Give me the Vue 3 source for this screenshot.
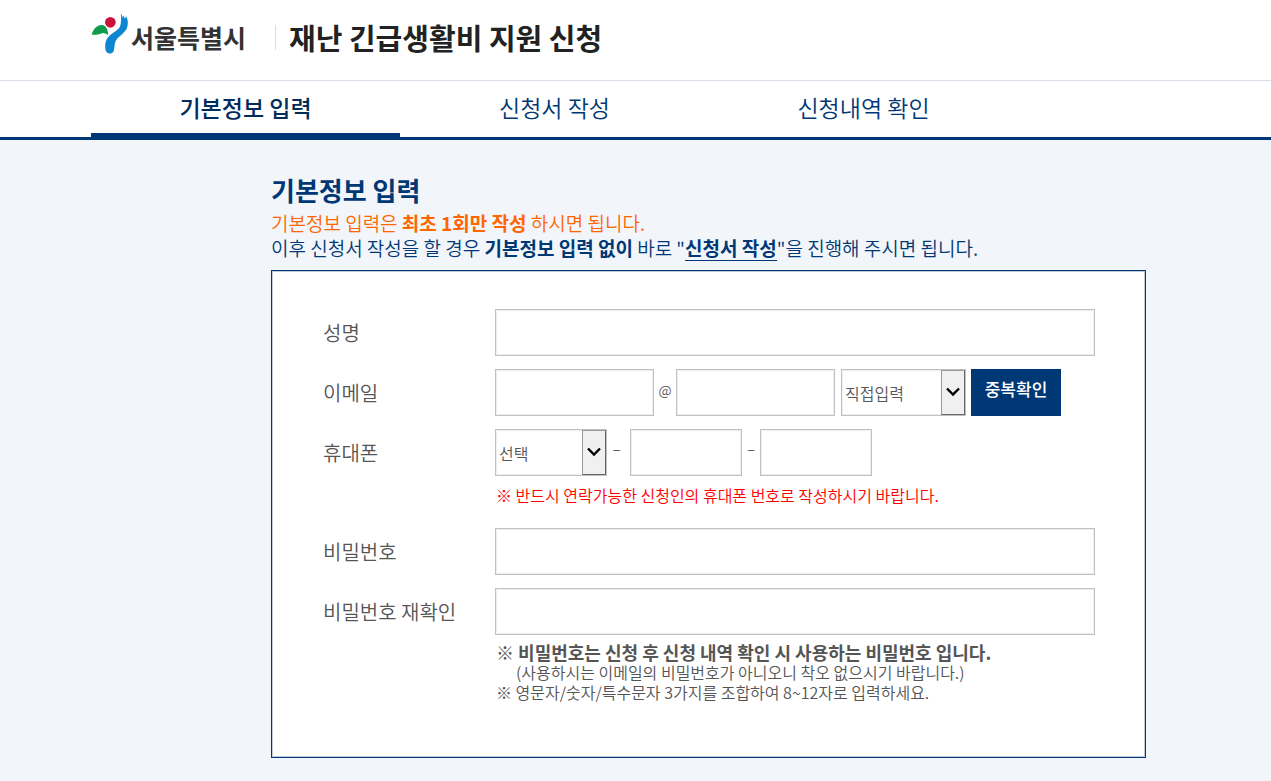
<script setup>
import { ref } from 'vue'

const tabs = ['기본정보 입력', '신청서 작성', '신청내역 확인']
const activeTab = ref(0)
const name = ref('')
const emailId = ref('')
const emailHost = ref('')
const emailChoice = ref('직접입력')
const phoneFirst = ref('선택')
const phoneMiddle = ref('')
const phoneLast = ref('')
const password = ref('')
const passwordCheck = ref('')
</script>

<template>
  <div class="page">
    <header class="header">
      <div class="container brand">
        <a href="#" class="logo">
          <svg class="logo-mark" viewBox="0 0 114 124" aria-hidden="true">
            <path fill="#0f9b4b" d="M2 67C8 47 20 37 35 38C46 40 52 55 51 68C43 62 36 60 29 64C21 67 13 68 2 67Z" />
            <circle fill="#c8143c" cx="58" cy="30" r="16" />
            <path fill="#0c86d0" d="M89 3C92 7 94 12 95 16L98 9C100 13 101 17 101 20L106 12C112 25 112 37 107 49C98 65 80 73 73 88C70 96 71 110 67 118C63 125 51 125 46 118C40 106 42 87 50 76C60 62 79 57 87 43C91 31 91 16 89 3Z" />
          </svg>
          <span class="logo-name">서울특별시</span>
        </a>
        <h1 class="title">재난 긴급생활비 지원 신청</h1>
      </div>
    </header>

    <nav class="nav">
      <div class="container tabs">
        <a
          v-for="(tab, i) in tabs"
          :key="tab"
          href="#"
          class="tab"
          :class="{ active: i === activeTab }"
          @click.prevent="activeTab = i"
        >{{ tab }}</a>
      </div>
    </nav>

    <main class="container">
      <div class="content">
        <h2 class="heading">기본정보 입력</h2>
        <p class="intro accent">기본정보 입력은 <b>최초 1회만 작성</b> 하시면 됩니다.</p>
        <p class="intro">이후 신청서 작성을 할 경우 <b>기본정보 입력 없이</b> 바로 "<a href="#">신청서 작성</a>"을 진행해 주시면 됩니다.</p>

        <form class="card" @submit.prevent>
          <div class="row">
            <label class="label" for="name">성명</label>
            <input id="name" v-model="name" class="box wide" type="text" />
          </div>

          <div class="row">
            <label class="label" for="email">이메일</label>
            <div class="fields">
              <input id="email" v-model="emailId" class="box email" type="text" />
              <span class="at">@</span>
              <input v-model="emailHost" class="box email" type="text" aria-label="이메일 도메인" />
              <div class="select host">
                <select v-model="emailChoice" class="box" aria-label="이메일 도메인 선택">
                  <option>직접입력</option>
                </select>
                <span class="arrow"><svg viewBox="0 0 14 10"><path d="M1 1.5L7 7.5L13 1.5" fill="none" stroke="#000" stroke-width="2.4" /></svg></span>
              </div>
              <button class="check" type="button">중복확인</button>
            </div>
          </div>

          <div class="row">
            <label class="label" for="phone">휴대폰</label>
            <div class="fields">
              <div class="select phone">
                <select id="phone" v-model="phoneFirst" class="box">
                  <option>선택</option>
                </select>
                <span class="arrow"><svg viewBox="0 0 14 10"><path d="M1 1.5L7 7.5L13 1.5" fill="none" stroke="#000" stroke-width="2.4" /></svg></span>
              </div>
              <span class="dash first">−</span>
              <input v-model="phoneMiddle" class="box phone" type="text" aria-label="휴대폰 가운데 자리" />
              <span class="dash">−</span>
              <input v-model="phoneLast" class="box phone" type="text" aria-label="휴대폰 끝 자리" />
            </div>
          </div>
          <p class="note warning">※ 반드시 연락가능한 신청인의 휴대폰 번호로 작성하시기 바랍니다.</p>

          <div class="row">
            <label class="label" for="password">비밀번호</label>
            <input id="password" v-model="password" class="box wide" type="password" />
          </div>
          <div class="row">
            <label class="label" for="password-check">비밀번호 재확인</label>
            <input id="password-check" v-model="passwordCheck" class="box wide" type="password" />
          </div>
          <div class="notes">
            <p class="note strong">※ 비밀번호는 신청 후 신청 내역 확인 시 사용하는 비밀번호 입니다.</p>
            <p class="note indent">(사용하시는 이메일의 비밀번호가 아니오니 착오 없으시기 바랍니다.)</p>
            <p class="note">※ 영문자/숫자/특수문자 3가지를 조합하여 8~12자로 입력하세요.</p>
          </div>
        </form>
      </div>
    </main>
  </div>
</template>

<style>
html {
  background: #f2f6fa;
}
</style>

<style scoped>
.page,
.page * {
  box-sizing: border-box;
}
.page {
  font-family: "Noto Sans CJK KR", sans-serif;
  font-weight: 350;
  color: #003876;
}
h1,
h2,
p {
  margin: 0;
}
a {
  color: inherit;
  text-decoration: none;
}
.container {
  max-width: 1089px;
  margin: 0 auto;
}
.header {
  background: #fff;
  border-bottom: 1px solid #d6deea;
}
.brand {
  display: flex;
  align-items: center;
  height: 80px;
  padding-bottom: 6px;
}
.logo {
  display: flex;
  align-items: center;
  width: 184px;
  color: #333;
}
.logo-mark {
  width: 38px;
  height: 42px;
  margin: 0 2px 8px 0;
}
.logo-name {
  font-size: 25px;
  line-height: 40px;
  font-weight: 700;
}
.title {
  display: flex;
  align-items: center;
  color: #222;
  font-size: 29px;
  line-height: 40px;
  font-weight: 700;
}
.title::before {
  content: "";
  width: 1px;
  height: 25px;
  margin-right: 13px;
  background: #d6deea;
}
.nav {
  background: #fff;
  border-bottom: 3px solid #003876;
}
.tabs {
  display: flex;
}
.tab {
  width: 309px;
  height: 56px;
  border-bottom: 4px solid transparent;
  font-size: 23px;
  line-height: 53px;
  text-align: center;
}
.tab.active {
  border-bottom-color: #003876;
  color: #002c5c;
  font-weight: 500;
}
.content {
  margin: 0 34px 24px 180px;
  padding-top: 32px;
}
.heading {
  font-size: 26px;
  line-height: 36px;
  font-weight: 700;
}
.intro {
  font-size: 19px;
  line-height: 25px;
}
.intro.accent {
  padding-top: 2px;
  height: 27px;
  color: #ff6600;
}
.intro b {
  font-weight: 700;
}
.intro a {
  display: inline-block;
  border-bottom: 1px solid #003876;
  line-height: 24px;
  font-weight: 700;
}
.card {
  display: flex;
  flex-direction: column;
  gap: 13px;
  margin-top: 9px;
  padding: 38px 50px 55px 51px;
  border: 1px solid #003876;
  background: #fff;
  box-shadow: inset 0 0 0 1px #c0cad8;
}
.row {
  display: flex;
  align-items: center;
}
.label {
  flex: none;
  width: 172px;
  color: #555;
  font-size: 20px;
  line-height: 30px;
}
.fields {
  display: flex;
  align-items: center;
}
.box {
  height: 47px;
  padding: 0 4px;
  border: 1px solid #c0c0c0;
  border-radius: 0;
  outline: 0;
  background: #fff;
  box-shadow: inset 0 0 0 1px #eee;
  color: #555;
  font-family: inherit;
  font-size: 16px;
  font-weight: inherit;
}
.wide {
  flex: 1;
  min-width: 0;
}
.email {
  width: 159px;
}
.at {
  width: 22px;
  padding-bottom: 6px;
  color: #555;
  font-size: 14px;
  line-height: 20px;
  text-align: center;
}
.select {
  position: relative;
  display: flex;
}
.select .box {
  width: 100%;
  padding-left: 3px;
  appearance: none;
}
.host {
  width: 125px;
  margin: 0 5px 0 6px;
}
.phone {
  width: 112px;
}
.arrow {
  position: absolute;
  top: 1px;
  right: 1px;
  bottom: 1px;
  display: flex;
  align-items: center;
  justify-content: center;
  width: 24px;
  padding-bottom: 2px;
  border: 1px solid #999;
  border-right-color: #666;
  border-bottom-color: #666;
  background: #f0f0f0;
  pointer-events: none;
}
.arrow svg {
  width: 14px;
  height: 10px;
}
.check {
  width: 90px;
  height: 47px;
  padding: 0 0 8px;
  border: 0;
  background: #003876;
  color: #fff;
  font-family: inherit;
  font-size: 17px;
  font-weight: 500;
}
.dash {
  width: 18px;
  padding-bottom: 6px;
  color: #555;
  font-size: 14px;
  line-height: 20px;
  text-align: center;
}
.dash.first {
  width: 23px;
  padding-right: 4px;
}
.note {
  color: #555;
  font-size: 16px;
  line-height: 20px;
}
.note.warning {
  margin: -4px 0 10px 173px;
  color: #f00;
}
.notes {
  margin: -6px 0 0 173px;
}
.note.strong {
  font-size: 18px;
  font-weight: 700;
}
.note.indent {
  padding-left: 20px;
}
</style>
